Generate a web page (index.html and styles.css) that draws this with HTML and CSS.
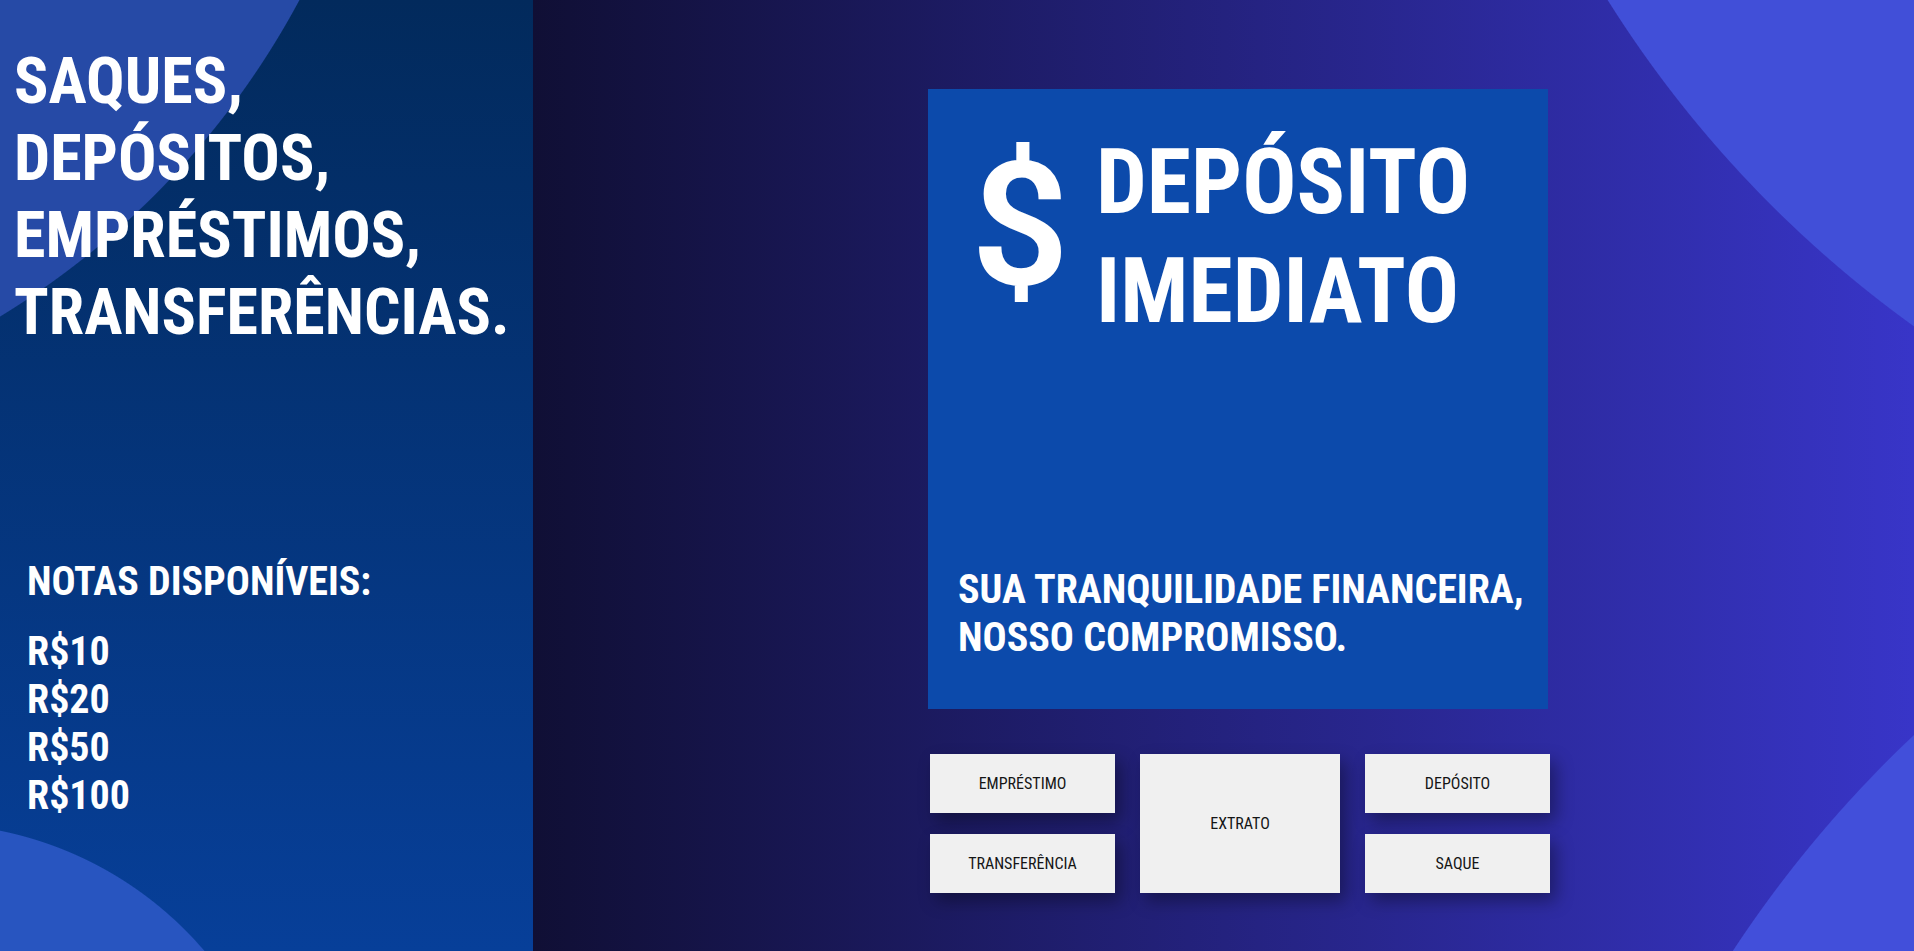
FILE: index.html
```html
<!DOCTYPE html>
<html lang="pt-BR">
<head>
<meta charset="utf-8">
<title>Banco</title>
<link rel="stylesheet" href="styles.css">
</head>
<body>
<div class="page">
  <aside class="side">
    <h1 class="headline">SAQUES,<br>DEPÓSITOS,<br>EMPRÉSTIMOS,<br>TRANSFERÊNCIAS.</h1>
    <section class="notes">
      <h2 class="notes-title">NOTAS DISPONÍVEIS:</h2>
      <ul class="notes-list">
        <li>R$10</li>
        <li>R$20</li>
        <li>R$50</li>
        <li>R$100</li>
      </ul>
    </section>
  </aside>
  <main class="main">
    <section class="card">
      <div class="card-head">
        <span class="dollar">$</span>
        <h2 class="card-title">DEPÓSITO<br>IMEDIATO</h2>
      </div>
      <p class="tagline">SUA TRANQUILIDADE FINANCEIRA,<br>NOSSO COMPROMISSO.</p>
    </section>
    <nav class="actions">
      <button class="btn">EMPRÉSTIMO</button>
      <button class="btn btn-tall">EXTRATO</button>
      <button class="btn">DEPÓSITO</button>
      <button class="btn">TRANSFERÊNCIA</button>
      <button class="btn">SAQUE</button>
    </nav>
  </main>
</div>
</body>
</html>
```
FILE: styles.css
```css
* { box-sizing: border-box; }
html, body { margin: 0; padding: 0; }
body {
  font-family: "Roboto Condensed", Roboto, "Liberation Sans", sans-serif;
  font-stretch: condensed;
  color: #fff;
}
.page {
  display: flex;
  width: 1914px;
  height: 951px;
  overflow: hidden;
}
.side {
  width: 533px;
  flex: none;
  padding: 43px 0 0 14px;
  background:
    radial-gradient(circle 829px at -431px -391px, #264aa6 calc(100% - 1px), transparent 100%),
    radial-gradient(circle 364px at -72px 1187px, #2855c0 calc(100% - 1px), transparent 100%),
    linear-gradient(to bottom, #022a5c, #073f99);
}
.headline {
  margin: 0;
  font-size: 64px;
  line-height: 77px;
  font-weight: 700;
}
.notes {
  margin-top: 207px;
  padding-left: 13px;
}
.notes-title {
  margin: 0;
  font-size: 40px;
  line-height: 48px;
  font-weight: 700;
}
.notes-list {
  list-style: none;
  margin: 22px 0 0;
  padding: 0;
  font-size: 40px;
  line-height: 48px;
  font-weight: 700;
}
.main {
  flex: 1;
  padding: 89px 0 0 395px;
  background:
    radial-gradient(circle 1165px at 2061px -619px, #414fd8 calc(100% - 1px), transparent 100%),
    radial-gradient(circle 1213px at 2213px 1617px, #424fda calc(100% - 1px), transparent 100%),
    linear-gradient(90deg, #100f35, #3835c8);
}
.card {
  width: 620px;
  height: 620px;
  background: #0c4aab;
  padding: 39px 16px 47px 30px;
  display: flex;
  flex-direction: column;
  justify-content: space-between;
}
.card-head {
  display: flex;
  align-items: flex-start;
}
.dollar {
  font-family: Roboto, sans-serif;
  font-stretch: normal;
  font-size: 172px;
  line-height: 1;
  font-weight: 600;
  margin: 11px 0 0 13px;
  width: 125px;
}
.card-title {
  margin: 0;
  font-size: 90px;
  line-height: 109px;
  font-weight: 700;
}
.tagline {
  margin: 0;
  font-size: 40px;
  line-height: 48px;
  font-weight: 700;
  white-space: nowrap;
}
.actions {
  margin: 45px 0 0 2px;
  display: grid;
  grid-template-columns: 185px 200px 185px;
  grid-template-rows: 59px 59px;
  gap: 21px 25px;
}
.btn {
  border: 0;
  background: #f0f0f0;
  color: #151515;
  font-family: "Roboto Condensed", Roboto, "Liberation Sans", sans-serif;
  font-stretch: condensed;
  font-size: 16px;
  padding: 0;
  box-shadow: 6px 8px 16px rgba(0, 0, 0, 0.35);
}
.btn-tall { grid-row: span 2; }
```
